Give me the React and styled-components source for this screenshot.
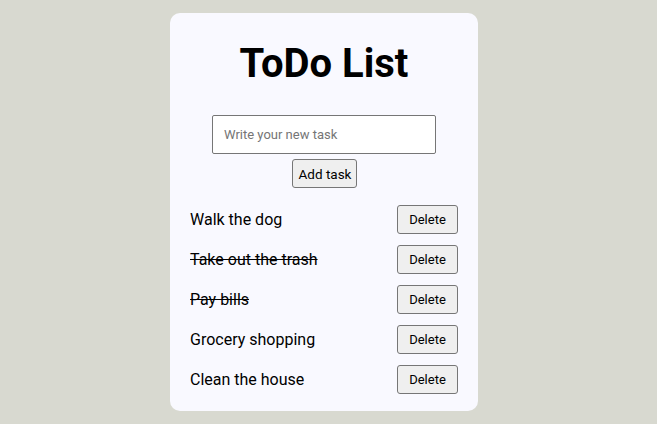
import React, { useState } from 'react'
import styled, { createGlobalStyle } from 'styled-components'

const GlobalStyle = createGlobalStyle`
  body {
    margin: 0;
    background: #d8d9d0;
    font-family: Roboto, "Liberation Sans", sans-serif;
  }
`

const Page = styled.div`
  display: flex;
  justify-content: center;
  align-items: flex-start;
  padding: 13px 9px 0 0;
  min-height: 424px;
  box-sizing: border-box;
`

const Card = styled.div`
  width: 308px;
  box-sizing: border-box;
  background: #f9f9ff;
  border-radius: 10px;
  padding: 20px 20px 17px;
  display: flex;
  flex-direction: column;
  align-items: center;
`

const Title = styled.h1`
  margin: 7px 0 28px;
  font-size: 40px;
  font-weight: 700;
  color: #000;
  line-height: normal;
`

const Input = styled.input`
  width: 224px;
  height: 39px;
  box-sizing: border-box;
  border: 1px solid #767676;
  border-radius: 2px;
  padding: 0 11px;
  font-family: Roboto, sans-serif;
  font-size: 13px;
  background: #fff;
  &::placeholder { color: #757575; }
`

const Button = styled.button`
  height: 29px;
  box-sizing: border-box;
  padding: 0 6px;
  border: 1px solid #767676;
  border-radius: 3px;
  background: #efefef;
  color: #000;
  font-family: Roboto, sans-serif;
  font-size: 13px;
  white-space: nowrap;
  cursor: pointer;
`

const AddButton = styled(Button)`
  margin-top: 5px;
  width: 65px;
  font-size: 13.5px;
`

const List = styled.ul`
  list-style: none;
  margin: 17px 0 0;
  padding: 0;
  width: 100%;
  display: flex;
  flex-direction: column;
  gap: 11px;
`

const Item = styled.li`
  display: flex;
  align-items: center;
  justify-content: space-between;
  height: 29px;
`

const ItemText = styled.span`
  font-size: 16px;
  color: #000;
  text-decoration: ${p => (p.$done ? 'line-through' : 'none')};
  cursor: pointer;
`

const DeleteButton = styled(Button)`
  width: 61px;
`

const initial = [
  { text: 'Walk the dog', done: false },
  { text: 'Take out the trash', done: true },
  { text: 'Pay bills', done: true },
  { text: 'Grocery shopping', done: false },
  { text: 'Clean the house', done: false },
]

export default function App() {
  const [tasks, setTasks] = useState(initial)
  const [value, setValue] = useState('')

  const addTask = () => {
    if (!value.trim()) return
    setTasks([...tasks, { text: value.trim(), done: false }])
    setValue('')
  }

  const toggle = (i) => {
    setTasks(tasks.map((t, j) => (j === i ? { ...t, done: !t.done } : t)))
  }

  const remove = (i) => {
    setTasks(tasks.filter((_, j) => j !== i))
  }

  return (
    <>
      <GlobalStyle />
      <Page>
        <Card>
          <Title>ToDo List</Title>
          <Input
            placeholder="Write your new task"
            value={value}
            onChange={(e) => setValue(e.target.value)}
          />
          <AddButton onClick={addTask}>Add task</AddButton>
          <List>
            {tasks.map((t, i) => (
              <Item key={i}>
                <ItemText $done={t.done} onClick={() => toggle(i)}>{t.text}</ItemText>
                <DeleteButton onClick={() => remove(i)}>Delete</DeleteButton>
              </Item>
            ))}
          </List>
        </Card>
      </Page>
    </>
  )
}
